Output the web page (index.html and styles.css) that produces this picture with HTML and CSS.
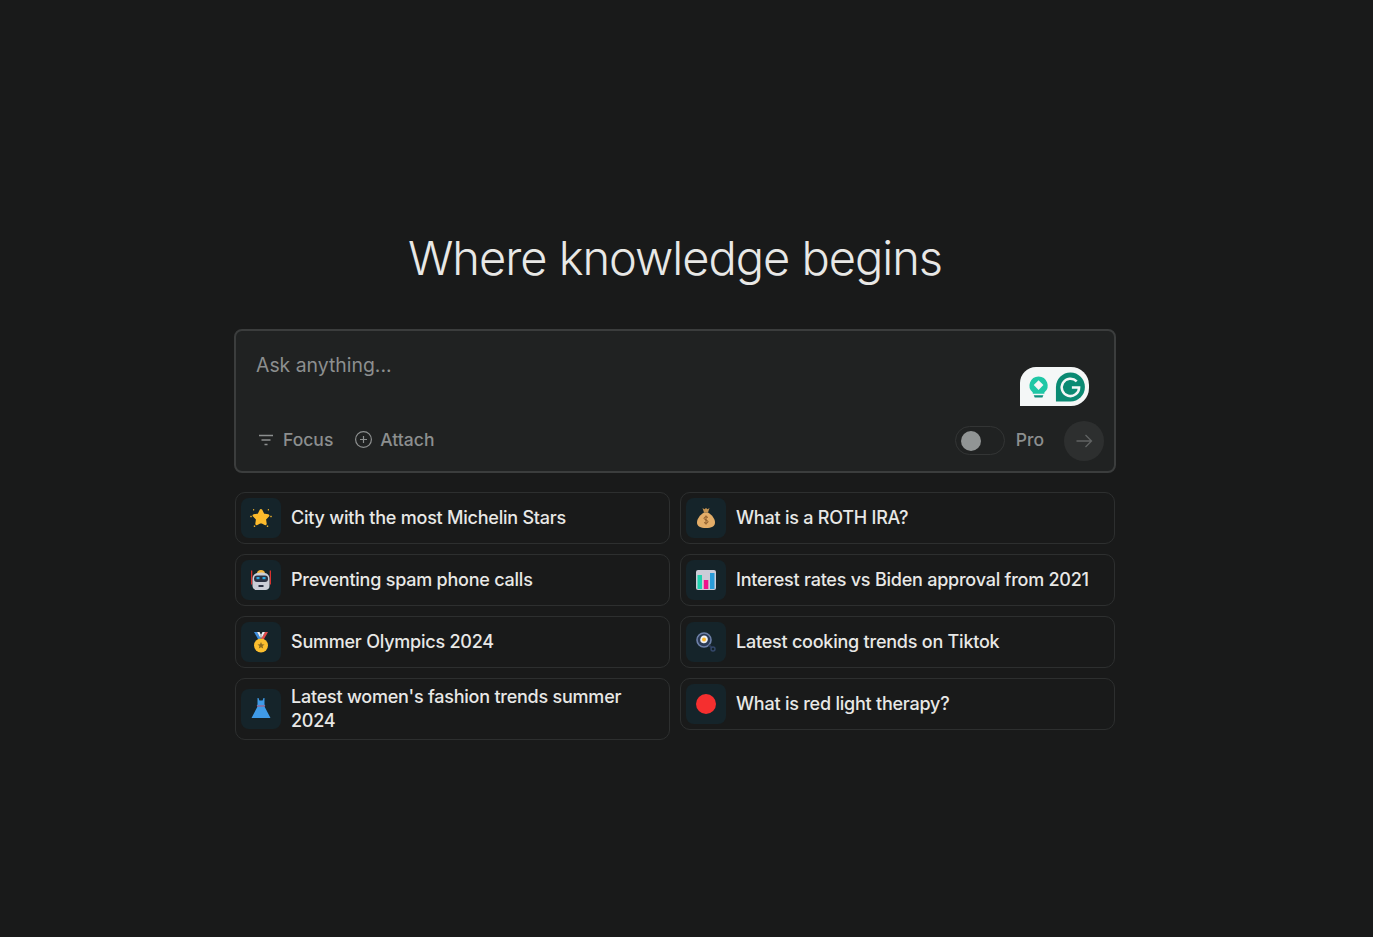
FILE: index.html
```html
<!DOCTYPE html>
<html lang="en">
<head>
    <meta charset="UTF-8">
    <meta name="viewport" content="width=device-width, initial-scale=1.0">
    <title>Where knowledge begins</title>
    <link rel="stylesheet" href="styles.css">
</head>
<body>
    <main class="container">
        <h1>Where knowledge begins</h1>

        <div class="ask-box">
            <div class="placeholder">Ask anything...</div>

            <!-- grammarly widget sits over the box -->
            <div class="grammarly">
                <svg width="24" height="26" viewBox="0 0 24 26">
                    <path d="M12 2a9.500 9.500 0 0 0-6 16.800V20h12v-1.200A9.500 9.500 0 0 0 12 2z" fill="#1fc7a6"/>
                    <path d="M12 6l5 5-5 5-5-5z" fill="#f4f7f7"/>
                    <path d="M7 21.500h10l-1 2.500H8z" fill="#0c8f7c"/>
                </svg>
                <svg width="32" height="32" viewBox="0 0 32 32">
                    <path d="M16 1a15 15 0 0 1 0 30H1V16A15 15 0 0 1 16 1z" fill="#0a8a73"/>
                    <path d="M22.500 10.200A9 9 0 1 0 25 16.500h-7.500" fill="none" stroke="#f4f7f7" stroke-width="2.600"/>
                </svg>
            </div>

            <div class="ask-footer">
                <div class="tools">
                    <button class="tool">
                        <svg width="18" height="18" viewBox="0 0 18 18" fill="none" stroke="currentColor" stroke-width="1.400">
                            <path d="M2 4.500h14M4.500 9h9M7.500 13.500h3"/>
                        </svg>
                        Focus
                    </button>
                    <button class="tool">
                        <svg width="17" height="17" viewBox="0 0 17 17" fill="none" stroke="currentColor" stroke-width="1.200">
                            <circle cx="8.500" cy="8.500" r="7.900"/>
                            <path d="M8.500 5v7M5 8.500h7"/>
                        </svg>
                        Attach
                    </button>
                </div>
                <div class="actions">
                    <div class="toggle"><span class="knob"></span></div>
                    <span class="pro">Pro</span>
                    <button class="send">
                        <svg width="18" height="18" viewBox="0 0 18 18" fill="none" stroke="currentColor" stroke-width="1.300">
                            <path d="M1.500 9h15M10.500 3l6 6-6 6"/>
                        </svg>
                    </button>
                </div>
            </div>
        </div>

        <div class="suggestions">
            <div class="column">
                <a class="suggestion">
                    <span class="icon">
                        <svg width="22" height="22" viewBox="0 0 22 22">
                            <path d="M11 3.500l2.200 4.300 4.800.8-3.400 3.400.7 4.800-4.300-2.200-4.300 2.200.7-4.800L4 8.600l4.800-.8z" fill="#fdbb2c" stroke="#fdbb2c" stroke-width="2.800" stroke-linejoin="round"/>
                            <g fill="#fdbb2c">
                                <rect x="0.300" y="8.800" width="1.400" height="1.400"/>
                                <rect x="20.300" y="8.800" width="1.400" height="1.400"/>
                                <rect x="3.800" y="18.500" width="1.400" height="1.400"/>
                                <rect x="16.800" y="18.500" width="1.400" height="1.400"/>
                                <rect x="3" y="2.200" width="1.200" height="1.200"/>
                                <rect x="17.800" y="2.200" width="1.200" height="1.200"/>
                            </g>
                        </svg>
                    </span>
                    <span class="label">City with the most Michelin Stars</span>
                </a>
                <a class="suggestion">
                    <span class="icon">
                        <svg width="22" height="22" viewBox="0 0 22 22">
                            <path d="M7 4.500C7 2.500 8.500 1 11 1s4 1.500 4 3.500z" fill="#f5b63a"/>
                            <rect x="1" y="1.500" width="1.300" height="14" fill="#d8322e"/>
                            <rect x="19.700" y="1.500" width="1.300" height="14" fill="#d8322e"/>
                            <path d="M2.500 10c0-4.500 3-6.500 8.500-6.500s8.500 2 8.500 6.500v7c0 2.500-2 4-4 4h-9c-2 0-4-1.500-4-4z" fill="#ccced6"/>
                            <rect x="4" y="6.500" width="14" height="6.500" rx="3" fill="#2b3040"/>
                            <rect x="6.500" y="8" width="3" height="2.200" fill="#2aa6e0"/>
                            <rect x="12.500" y="8" width="3" height="2.200" fill="#2aa6e0"/>
                            <rect x="8.500" y="16" width="5" height="2" fill="#2b3040"/>
                        </svg>
                    </span>
                    <span class="label">Preventing spam phone calls</span>
                </a>
                <a class="suggestion">
                    <span class="icon">
                        <svg width="22" height="22" viewBox="0 0 22 22">
                            <path d="M4 1h3l4 7H8z" fill="#3d8fe0"/>
                            <path d="M18 1h-3l-4 7h3z" fill="#e04848"/>
                            <path d="M7 1h2.500l2 4-1.200 2zM15 1h-2.500l-2 4 1.200 2z" fill="#eceef2"/>
                            <circle cx="11" cy="14.500" r="7" fill="#fbbe2e"/>
                            <path d="M11 11l1 2.300 2.500.2-1.900 1.600.6 2.400-2.200-1.300-2.200 1.300.6-2.400-1.900-1.600 2.500-.2z" fill="#8a6a22"/>
                        </svg>
                    </span>
                    <span class="label">Summer Olympics 2024</span>
                </a>
                <a class="suggestion">
                    <span class="icon">
                        <svg width="22" height="22" viewBox="0 0 22 22">
                            <path d="M7.500 0h1l.9 2.500h3.200l.9-2.500h1v6.500l.8 1-.8 1 6 11.500H1.500l6-11.500-.8-1 .8-1z" fill="#3f9be8"/>
                            <rect x="7" y="7.500" width="8" height="1" fill="#c0506a"/>
                        </svg>
                    </span>
                    <span class="label">Latest women's fashion trends summer 2024</span>
                </a>
            </div>

            <div class="column">
                <a class="suggestion">
                    <span class="icon">
                        <svg width="22" height="22" viewBox="0 0 22 22">
                            <path d="M7.500 1l2 1.200L11 1l1.500 1.200 2-1.200-1.500 4.500H9z" fill="#c49352"/>
                            <path d="M9 5.500h4c3 2 7 5.500 7 10 0 4-3.500 5.500-9 5.500s-9-1.500-9-5.500c0-4.500 4-8 7-10z" fill="#e3ad68"/>
                            <path d="M13 10.500c-1-1-4-1-4 .8s4 1.500 4 3.400-3 1.800-4 .8M11 8.500v9" fill="none" stroke="#8a5a2a" stroke-width="1"/>
                        </svg>
                    </span>
                    <span class="label">What is a ROTH IRA?</span>
                </a>
                <a class="suggestion">
                    <span class="icon">
                        <svg width="20" height="20" viewBox="0 0 20 20">
                            <rect width="20" height="20" rx="2" fill="#ccccd8"/>
                            <rect x="1.500" y="5" width="4.500" height="14" fill="#1fd1b0"/>
                            <rect x="7.800" y="10" width="4.500" height="9" fill="#f0128c"/>
                            <rect x="14" y="3" width="4.500" height="16" fill="#2a9bd8"/>
                        </svg>
                    </span>
                    <span class="label">Interest rates vs Biden approval from 2021</span>
                </a>
                <a class="suggestion">
                    <span class="icon">
                        <svg width="22" height="22" viewBox="0 0 22 22">
                            <circle cx="9" cy="9" r="7" fill="#2b3a55" stroke="#6d80a8" stroke-width="1.600"/>
                            <path d="M9 4.500c2.500 0 4 1.800 3.800 4s-1.800 4-4.300 3.800S5 10.500 5.300 8.300 7 4.500 9 4.500z" fill="#eef0f2"/>
                            <circle cx="9" cy="8.500" r="2" fill="#fbb62c"/>
                            <path d="M14 14l3 3" stroke="#2b3a55" stroke-width="2"/>
                            <circle cx="18" cy="18" r="2" fill="none" stroke="#34476a" stroke-width="1.400"/>
                        </svg>
                    </span>
                    <span class="label">Latest cooking trends on Tiktok</span>
                </a>
                <a class="suggestion">
                    <span class="icon">
                        <svg width="20" height="20" viewBox="0 0 20 20">
                            <circle cx="10" cy="10" r="10" fill="#f52f2f"/>
                        </svg>
                    </span>
                    <span class="label">What is red light therapy?</span>
                </a>
            </div>
        </div>
    </main>
</body>
</html>
```

FILE: styles.css
```css
* {
    box-sizing: border-box;
}
body {
    font-family: Inter, "Liberation Sans", sans-serif;
    margin: 0;
    padding-right: 23px;
    min-height: 937px;
    background-color: #191a1a;
    color: #e8e8e6;
}
.container {
    width: 882px;
    margin: 0 auto;
    padding-top: 228px;
}
h1 {
    margin: 0 0 41px;
    height: 60px;
    font-size: 47px;
    line-height: 60px;
    font-weight: 350;
    letter-spacing: -1.03px;
    text-align: center;
    color: #e8e8e6;
}
.ask-box {
    position: relative;
    height: 144px;
    padding: 20px 10px 10px 20px;
    background-color: #202222;
    border: 2px solid #3b3d3d;
    border-radius: 8px;
}
.placeholder {
    height: 28px;
    font-size: 19.4px;
    line-height: 28px;
    color: #8c8f8f;
}
.grammarly {
    position: absolute;
    top: 36px;
    right: 25px;
    width: 69px;
    height: 39px;
    padding: 3px 3px 3px 7px;
    display: flex;
    align-items: center;
    gap: 5px;
    background-color: #f4f7f7;
    border-radius: 16px 18px 18px 0;
}
.ask-footer {
    display: flex;
    justify-content: space-between;
    align-items: center;
    margin-top: 42px;
}
.tools {
    display: flex;
    gap: 22px;
    margin: -3px 0 0 1px;
}
.tool {
    display: flex;
    align-items: center;
    gap: 8px;
    padding: 0;
    background: none;
    border: none;
    font-family: inherit;
    font-size: 17.5px;
    font-weight: 500;
    color: #8c8f8f;
}
.actions {
    display: flex;
    align-items: center;
}
.toggle {
    width: 50px;
    height: 29px;
    margin: -1px 11px 0 0;
    padding: 4px 5px;
    border: 1px solid #333535;
    border-radius: 15px;
}
.knob {
    display: block;
    width: 20px;
    height: 20px;
    border-radius: 50%;
    background-color: #919595;
}
.pro {
    margin: -3px 20px 0 0;
    font-size: 17.5px;
    font-weight: 500;
    color: #8c8f8f;
}
.send {
    width: 40px;
    height: 40px;
    display: flex;
    align-items: center;
    justify-content: center;
    background-color: #2d2f2f;
    border: none;
    border-radius: 50%;
    color: #606363;
}
.suggestions {
    display: grid;
    grid-template-columns: 1fr 1fr;
    gap: 10px;
    margin: 19px 1px 0;
}
.column {
    display: flex;
    flex-direction: column;
    gap: 10px;
}
.suggestion {
    display: flex;
    align-items: center;
    gap: 10px;
    min-height: 52px;
    padding: 5px;
    border: 1px solid #2d2f2f;
    border-radius: 10px;
}
.icon {
    flex: none;
    width: 40px;
    height: 40px;
    display: flex;
    align-items: center;
    justify-content: center;
    background-color: #15242a;
    border-radius: 8px;
}
.label {
    padding: 1px 0;
    font-size: 18px;
    line-height: 24px;
    font-weight: 500;
    letter-spacing: -0.23px;
    color: #e8e8e6;
}
```
